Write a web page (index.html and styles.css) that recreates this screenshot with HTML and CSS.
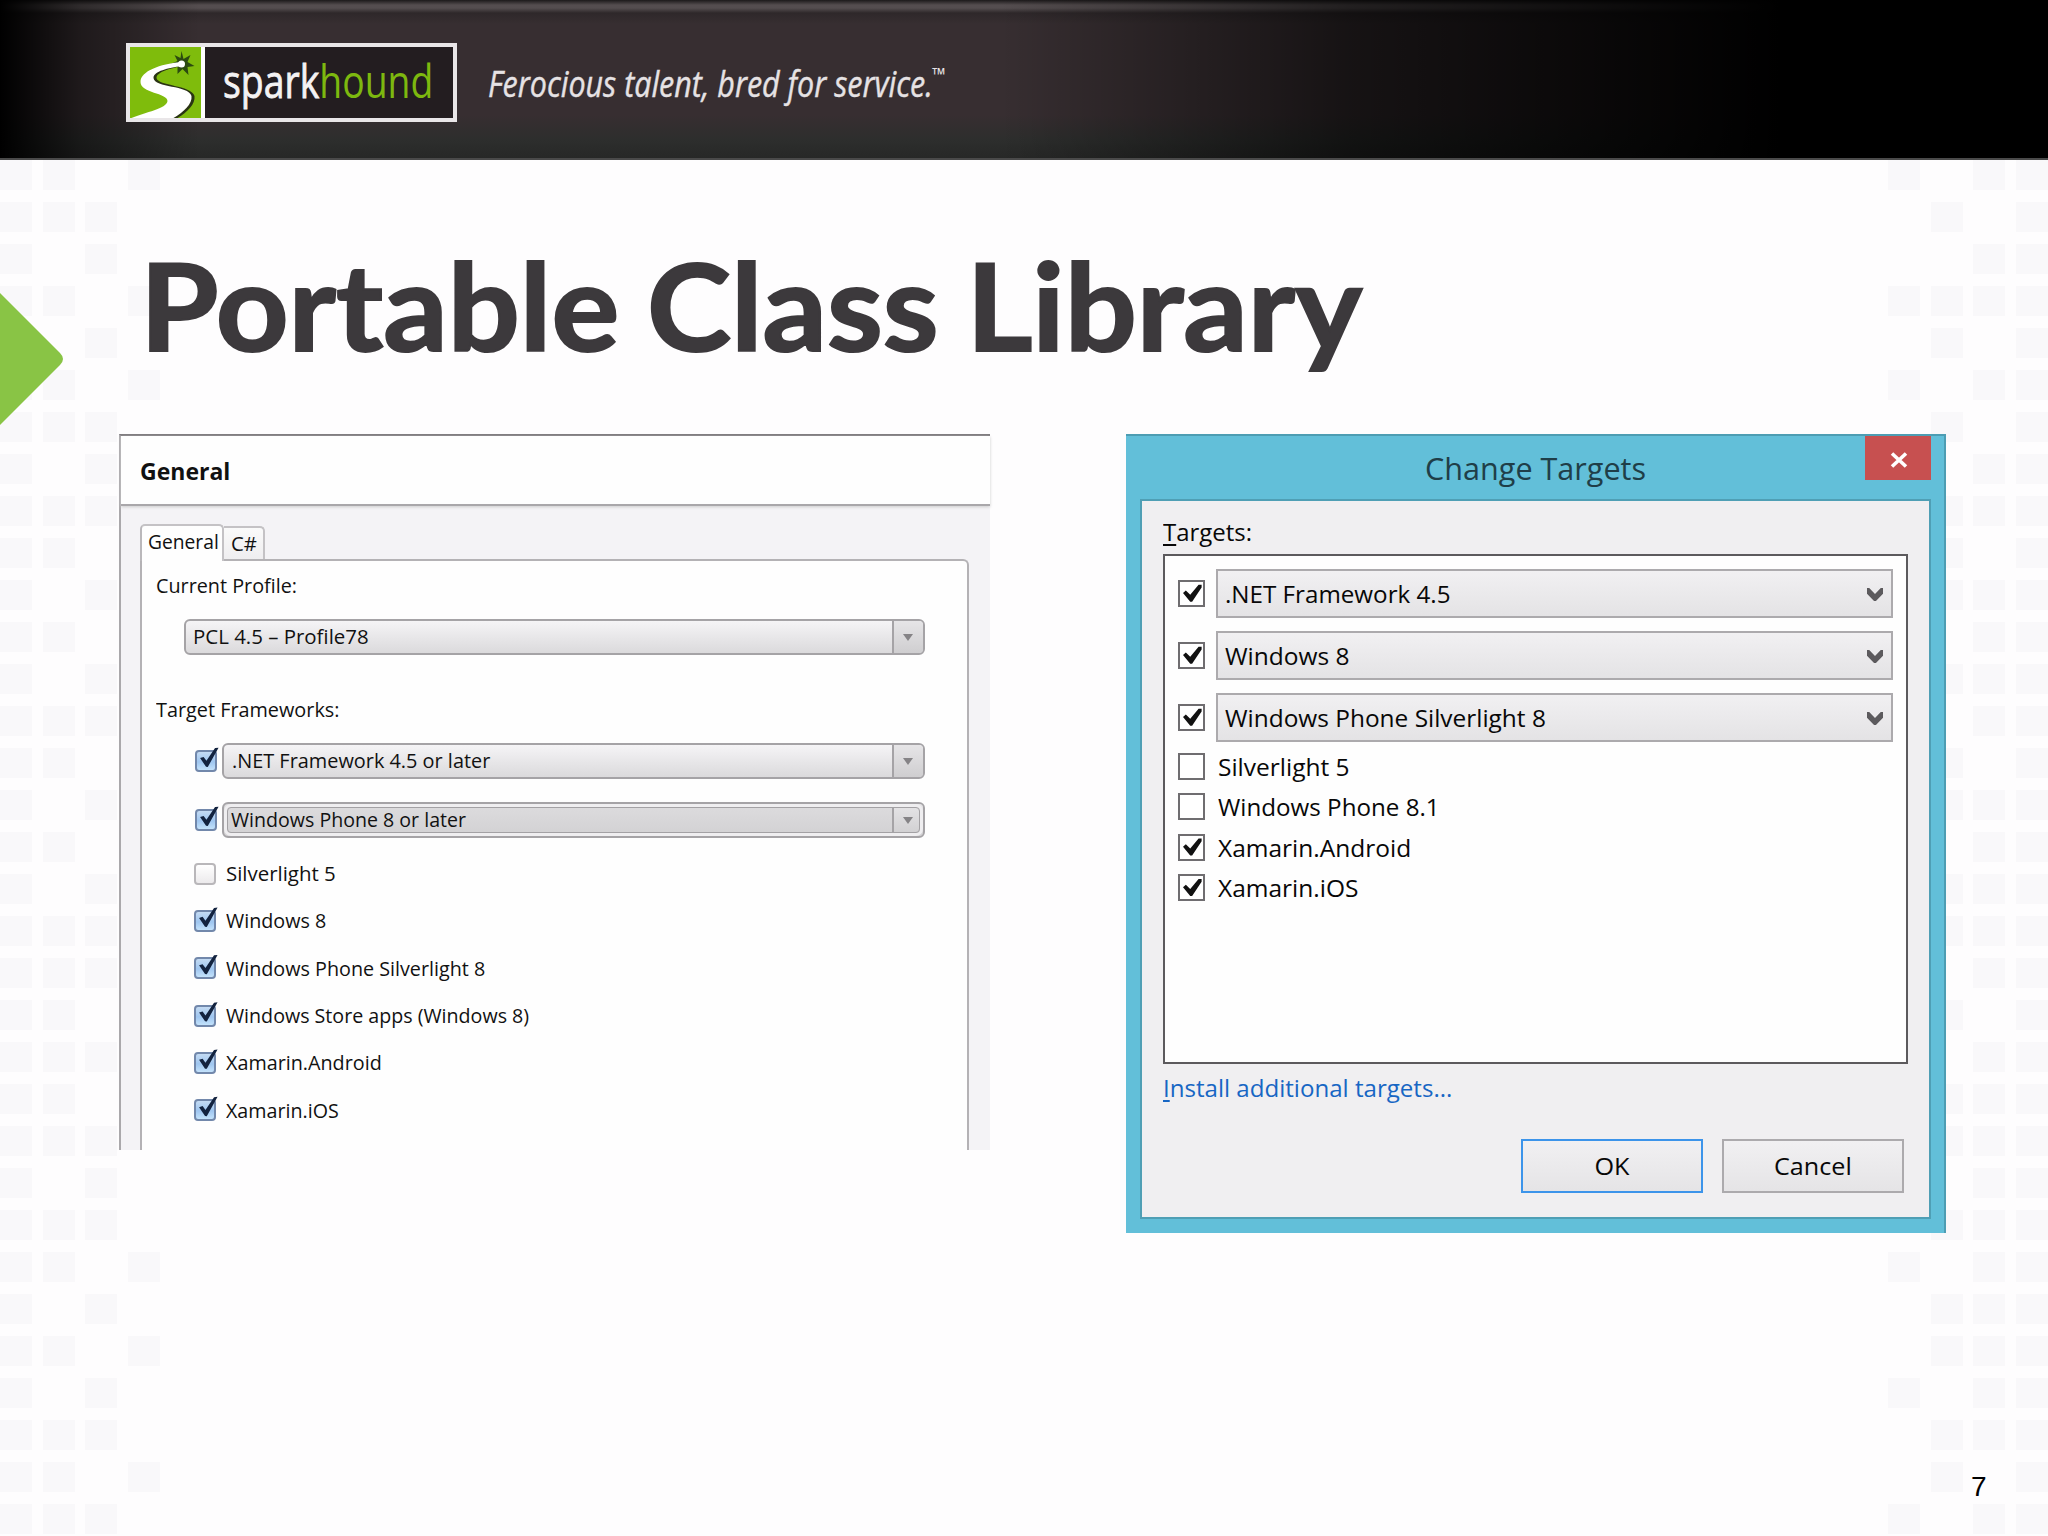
FILE: index.html
```html
<!DOCTYPE html>
<html lang="en">
<head>
  <meta charset="UTF-8">
  <title>Portable Class Library</title>
  <link rel="stylesheet" href="styles.css">
</head>
<body>
  <div class="pattern pattern-left" id="patternLeft"></div>
  <div class="pattern pattern-right" id="patternRight"></div>
  <svg class="arrow" viewBox="0 0 64 136"><path d="M0 1 L60 61 Q66 67 60 73 L0 133 Z" fill="#89c445"/></svg>

  <header class="banner">
    <div class="logo">
      <svg class="logo-mark" viewBox="0 0 70 71">
        <path d="M51 4 L53 12 L60 8 L57 15 L64 19 L57 20 L58 28 L52 22 L47 27 L47 19 L40 17 L47 14 L44 8 L50 11 Z" fill="#2c4a10"/>
        <path d="M53 17 C34 20 15 25 14 34 C14 43 42 45 42 54 C41 62 30 67 18 71 L47 71 C57 65 65 57 64 49 C61 38 27 39 26 31 C26 25 40 21 53 19 Z" fill="#2a3413"/>
        <path d="M50 15 C30 17 10 24 10 35 C10 46 37 46 37 54 C36 62 15 65 1 71 L43 71 C53 65 62 57 61 49 C58 38 24 41 23 31 C23 24 38 21 51 19 Z" fill="#fff"/>
        <circle cx="51" cy="17" r="3.5" fill="#fff"/>
      </svg>
      <div class="logo-name"><span class="fit" data-w="210">spark<b>hound</b></span></div>
    </div>
    <div class="tagline">
      <div class="tagline-text"><span class="fit" data-w="445">Ferocious talent, bred for service.</span></div>
      <span class="tm fit" data-w="14">™</span>
    </div>
  </header>

  <h1><span class="fit" data-w="1222">Portable Class Library</span></h1>

  <main class="windows">
    <section class="mac">
      <div class="mac-head"><span class="fit" data-w="90">General</span></div>
      <div class="mac-body">
        <div class="tabs">
          <div class="tab active"><span class="fit" data-w="71">General</span></div>
          <div class="tab"><span class="fit" data-w="26">C#</span></div>
        </div>
        <div class="page">
          <div class="mac-label"><span class="fit" data-w="141">Current Profile:</span></div>
          <div class="mac-combo profile"><span class="fit" data-w="176">PCL 4.5 – Profile78</span><i></i></div>
          <div class="mac-label frameworks"><span class="fit" data-w="183">Target Frameworks:</span></div>
          <div class="mac-row">
            <span class="mac-check on"></span>
            <div class="mac-combo"><span class="fit" data-w="258">.NET Framework 4.5 or later</span><i></i></div>
          </div>
          <div class="mac-row">
            <span class="mac-check on"></span>
            <div class="mac-combo focused"><span class="fit" data-w="235">Windows Phone 8 or later</span><i></i></div>
          </div>
          <ul class="mac-list">
            <li><span class="mac-check"></span><span class="fit" data-w="110">Silverlight 5</span></li>
            <li><span class="mac-check on"></span><span class="fit" data-w="100">Windows 8</span></li>
            <li><span class="mac-check on"></span><span class="fit" data-w="259">Windows Phone Silverlight 8</span></li>
            <li><span class="mac-check on"></span><span class="fit" data-w="303">Windows Store apps (Windows 8)</span></li>
            <li><span class="mac-check on"></span><span class="fit" data-w="156">Xamarin.Android</span></li>
            <li><span class="mac-check on"></span><span class="fit" data-w="113">Xamarin.iOS</span></li>
          </ul>
        </div>
      </div>
    </section>

    <section class="win">
      <div class="win-title">
        <div class="win-name"><span class="fit" data-w="221">Change Targets</span></div>
        <div class="win-close"><svg width="18" height="16" viewBox="0 0 18 16"><path d="M2 1.5 L16 14.5 M16 1.5 L2 14.5" stroke="#fff" stroke-width="3.6"/></svg></div>
      </div>
      <div class="win-body">
        <div class="win-label"><span class="fit" data-w="89"><u>T</u>argets:</span></div>
        <div class="win-list">
          <div class="win-row"><span class="win-check on"></span><div class="win-combo"><span class="fit" data-w="226">.NET Framework 4.5</span></div></div>
          <div class="win-row"><span class="win-check on"></span><div class="win-combo"><span class="fit" data-w="125">Windows 8</span></div></div>
          <div class="win-row"><span class="win-check on"></span><div class="win-combo"><span class="fit" data-w="321">Windows Phone Silverlight 8</span></div></div>
          <div class="win-item"><span class="win-check"></span><span class="fit" data-w="132">Silverlight 5</span></div>
          <div class="win-item"><span class="win-check"></span><span class="fit" data-w="222">Windows Phone 8.1</span></div>
          <div class="win-item"><span class="win-check on"></span><span class="fit" data-w="193">Xamarin.Android</span></div>
          <div class="win-item"><span class="win-check on"></span><span class="fit" data-w="140">Xamarin.iOS</span></div>
        </div>
        <div class="win-link"><span class="fit" data-w="289"><u>I</u>nstall additional targets...</span></div>
        <div class="win-buttons">
          <div class="win-button default"><span class="fit" data-w="35">OK</span></div>
          <div class="win-button"><span class="fit" data-w="78">Cancel</span></div>
        </div>
      </div>
    </section>
  </main>

  <div class="page-number">7</div>

  <script>
    // one string per row, one character per column
    const left = [
      'xx.x', 'xxx.', 'x.x.', 'xx.x', 'x.x.', 'xx.x', 'xxx.', 'x.x.', 'xxx.', 'xx..', 'x.x.',
      'xx..', 'x.x.', 'xxx.', 'xx..', 'x.x.', 'xx..', 'x.x.', 'xxx.', 'xxx.', 'xx..', 'xxx.',
      'xx..', 'xxx.', 'x.x.', 'xxx.', 'xx.x', 'x.x.', 'xx.x', 'x.x.', 'xxx.', 'xx.x', 'xxx.'
    ];
    const right = [
      'x.xx', '.x.x', '..xx', 'xxxx', '.x.x', 'x.xx', '.x.x', '..xx', '.xxx', '.x.x', '.xxx',
      '..xx', '.xxx', '..xx', '.x.x', '.xxx', '..xx', '.xxx', '.xxx', '..xx', '.x.x', '..xx',
      '.xxx', '.xxx', '..xx', '.xxx', 'x.xx', '.xxx', '.xxx', 'x.xx', '.xxx', '.x.x', 'x.xx'
    ];

    function drawPattern(id, rows) {
      const box = document.getElementById(id);
      rows.join('').split('').forEach(c => {
        const cell = document.createElement('div');
        if (c === 'x') cell.className = 'dot';
        box.appendChild(cell);
      });
    }
    drawPattern('patternLeft', left);
    drawPattern('patternRight', right);

    // condense each label to its width
    document.querySelectorAll('.fit').forEach(el => {
      el.style.transform = `scaleX(${el.dataset.w / el.offsetWidth})`;
    });
  </script>
</body>
</html>
```

FILE: styles.css
```css
* {
  box-sizing: border-box;
}

body {
  position: relative;
  margin: 0;
  width: 2048px;
  height: 1536px;
  overflow: hidden;
  background: #fefdfe;
  color: #111;
  font-family: "Open Sans", "Noto Sans", sans-serif;
}

.fit {
  display: inline-block;
  white-space: nowrap;
  transform-origin: left center;
}

/* background squares */
.pattern {
  position: absolute;
  top: 160px;
  display: grid;
  grid-template-columns: repeat(4, 32px);
  grid-auto-rows: 30px;
  column-gap: 10.6px;
  row-gap: 12px;
}

.pattern-left {
  left: 0;
}

.pattern-right {
  left: 1888px;
}

.dot {
  background: #f9f8fa;
}

.arrow {
  position: absolute;
  left: 0;
  top: 292px;
  width: 64px;
  height: 136px;
}

/* banner */
.banner {
  position: relative;
  display: flex;
  align-items: flex-start;
  height: 160px;
  padding: 43px 0 0 126px;
  border-bottom: 2px solid #4a4a4a;
  background:
    linear-gradient(90deg, #000 0, rgba(0,0,0,0.45) 80px, transparent 200px, transparent 1000px, rgba(0,0,0,0.6) 1350px, #000 1780px),
    linear-gradient(#1c191a 0, #544d4f 5px, #544d4f 8px, #2e282a 13px, #372e31 24px, #372e31 115px, #2d2e2d 140px, #272827 158px);
}

.logo {
  display: flex;
  width: 331px;
  height: 79px;
  border: 4px solid #e9e6e8;
}

.logo-mark {
  flex: none;
  width: 71px;
  height: 71px;
  background: #7fbc0c;
}

.logo-name {
  flex: none;
  width: 252px;
  padding-left: 18px;
  border-left: 4px solid #fff;
  background: #231d20;
  color: #f4f2f3;
  font-size: 45px;
  line-height: 68px;
  -webkit-text-stroke: 0.8px;
}

.logo-name b {
  color: #7db80f;
  font-weight: normal;
  -webkit-text-stroke: 0;
}

.tagline {
  display: flex;
  padding-left: 31px;
  color: #e6e2e4;
  font-size: 36px;
  font-style: italic;
  line-height: 82px;
}

.tagline-text {
  width: 444px;
  -webkit-text-stroke: 0.4px;
}

.tm {
  font-size: 18px;
  font-style: normal;
  line-height: 62px;
}

h1 {
  margin: 0;
  padding: 65px 0 0 140px;
  height: 274px;
  color: #3c393c;
  font-family: Lato, sans-serif;
  font-size: 121px;
  font-weight: bold;
  line-height: 160px;
  word-spacing: -3px;
  -webkit-text-stroke: 2px #3c393c;
}

.windows {
  position: relative;
  display: flex;
  align-items: flex-start;
  gap: 136px;
  padding-left: 119px;
}

/* left window */
.mac {
  display: flex;
  flex-direction: column;
  width: 871px;
  height: 716px;
  border-top: 2px solid #7d7a7d;
  border-left: 2px solid #aaa8ab;
  background: #f4f3f6;
  font-size: 19.5px;
}

.mac-head {
  height: 70px;
  padding-left: 19px;
  border-bottom: 2px solid #a9a7aa;
  background: #fefefe;
  box-shadow: 0 1px 3px #ccc;
  font-size: 22.5px;
  font-weight: bold;
  line-height: 72px;
}

.mac-body {
  flex: 1;
  display: flex;
  flex-direction: column;
  padding: 18px 21px 0 19px;
}

.tabs {
  display: flex;
  align-items: flex-end;
  height: 35px;
}

.tab {
  width: 41px;
  height: 33px;
  padding-left: 7px;
  border: 2px solid #c4c2c5;
  border-left: 0;
  border-bottom: 0;
  border-radius: 0 5px 0 0;
  background: linear-gradient(#fafafa, #efeef0);
  line-height: 31px;
}

.tab.active {
  position: relative;
  width: 84px;
  height: 37px;
  margin-bottom: -2px;
  padding-left: 6px;
  border-left: 2px solid #bab8bb;
  border-radius: 5px 5px 0 0;
  background: #fefefe;
  line-height: 32px;
}

.page {
  flex: 1;
  padding-top: 13px;
  border: 2px solid #b4b2b5;
  border-bottom: 0;
  border-radius: 0 6px 0 0;
  background: #fefefe;
}

.mac-label {
  height: 24px;
  padding-left: 14px;
  line-height: 24px;
}

.frameworks {
  margin: 43px 0 21px;
}

.mac-combo {
  position: relative;
  flex: none;
  width: 703px;
  height: 36px;
  padding-left: 8px;
  border: 2px solid #a5a3a6;
  border-radius: 6px;
  background: linear-gradient(#f5f4f6, #dbdadc);
  line-height: 32px;
}

.profile {
  width: 741px;
  margin: 21px 0 0 42px;
  padding-left: 7px;
}

.mac-combo i {
  position: absolute;
  top: 0;
  right: 0;
  width: 31px;
  height: 32px;
  border-left: 2px solid #a5a3a6;
  border-radius: 0 4px 4px 0;
  background: linear-gradient(#e6e5e7, #cfced0);
}

.mac-combo i::after {
  content: "";
  position: absolute;
  left: 9px;
  top: 13px;
  border: 5px solid transparent;
  border-top: 7px solid #858386;
  border-bottom: 0;
}

.mac-combo.focused {
  padding-left: 7px;
  background: linear-gradient(#dddcde, #d2d1d3);
}

/* inner focus ring */
.mac-combo.focused::before {
  content: "";
  position: absolute;
  inset: 3px;
  border: 1px solid #a3a1a4;
  border-radius: 4px;
  box-shadow: 0 0 0 3px #efeef0;
  z-index: 1;
}

.mac-row {
  display: flex;
  align-items: center;
  gap: 5px;
  margin-bottom: 23px;
  padding-left: 53px;
}

.mac-check {
  position: relative;
  flex: none;
  width: 22px;
  height: 22px;
  border: 2px solid #b9b7ba;
  border-radius: 4px;
  background: linear-gradient(#fff, #eceaec);
}

.mac-check.on {
  border-color: #7288ab;
  background: linear-gradient(#c4dbf3, #9fc6f0 55%, #c3e2fb);
}

.mac-check.on::after {
  content: "";
  position: absolute;
  left: 0;
  top: -5px;
  width: 22px;
  height: 22px;
  background: #13233f;
  clip-path: polygon(14% 50%, 30% 45%, 43% 63%, 82% 5%, 98% 3%, 49% 91%, 41% 90%);
}

.mac-list {
  margin: -11px 0 0;
  padding: 0 0 0 52px;
  list-style: none;
}

.mac-list li {
  display: flex;
  align-items: center;
  gap: 10px;
  height: 47.3px;
}

/* right window */
.win {
  width: 820px;
  height: 799px;
  padding: 0 13px 14px 14px;
  border-top: 2px solid #4d9db3;
  border-right: 2px solid #4d9db3;
  background: #62bfd9;
  color: #080808;
  font-size: 24.5px;
}

.win-title {
  display: flex;
  justify-content: flex-end;
  height: 63px;
  color: #1f3e48;
  font-size: 31px;
  line-height: 65px;
}

.win-name {
  width: 223px;
  margin-right: 217px;
}

.win-close {
  display: flex;
  align-items: center;
  justify-content: center;
  width: 66px;
  height: 44px;
  padding: 3px 0 0 2px;
  background: #c75050;
}

.win-body {
  height: 720px;
  padding: 18px 21px 0;
  border: 2px solid #4f9fb5;
  background: #f0eff1;
}

.win-label {
  height: 26px;
  line-height: 26px;
}

.win u {
  text-decoration-thickness: 2px;
  text-underline-offset: 3px;
}

.win-list {
  width: 745px;
  height: 510px;
  margin-top: 9px;
  padding: 13px 13px 0;
  border: 2px solid #5c5a5d;
  background: #fefefe;
}

.win-row {
  display: flex;
  align-items: center;
  gap: 11px;
  margin-bottom: 13px;
}

.win-row:nth-child(3) {
  margin-bottom: 4px;
}

.win-check {
  position: relative;
  flex: none;
  width: 27px;
  height: 27px;
  border: 2px solid #6f6d70;
  background: #fff;
}

.win-check.on::after {
  content: "";
  position: absolute;
  left: 3px;
  top: 2px;
  width: 19px;
  height: 18px;
  background: #111;
  clip-path: polygon(0 50%, 15% 36%, 38% 60%, 82% 4%, 98% 4%, 98% 20%, 48% 98%, 38% 98%);
}

.win-combo {
  position: relative;
  width: 677px;
  height: 49px;
  padding-left: 7px;
  border: 2px solid #acaaad;
  background: linear-gradient(#f1f0f2, #e4e3e5);
  line-height: 46px;
}

.win-combo::after {
  content: "";
  position: absolute;
  right: 8px;
  top: 17px;
  width: 16px;
  height: 13px;
  background: #5c5a5d;
  clip-path: polygon(0 0, 14% 0, 50% 46%, 86% 0, 100% 0, 100% 44%, 56% 100%, 44% 100%, 0 44%);
}

.win-item {
  display: flex;
  align-items: center;
  gap: 13px;
  height: 40.5px;
}

.win-link {
  margin-top: 11px;
  color: #1766c4;
  line-height: 26px;
}

.win-buttons {
  display: flex;
  justify-content: flex-end;
  gap: 19px;
  margin: 38px 4px 0 0;
}

.win-button {
  display: flex;
  justify-content: center;
  width: 182px;
  height: 54px;
  border: 2px solid #acaaad;
  background: linear-gradient(#f1f0f2, #e5e4e6);
  line-height: 50px;
}

.win-button .fit {
  transform-origin: center;
}

.win-button.default {
  border-color: #3c94ea;
}

.page-number {
  position: absolute;
  left: 1971px;
  top: 1471px;
  color: #000;
  font: 28px/32px "Liberation Sans", Arial, sans-serif;
}
```
